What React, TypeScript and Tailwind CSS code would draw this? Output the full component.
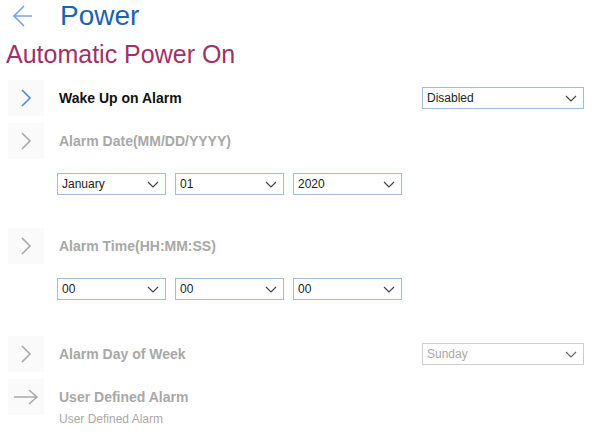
import { ReactNode } from 'react';

type SelectProps = {
  value: string;
  width: string;
  disabled?: boolean;
};

function FakeSelect({ value, width, disabled }: SelectProps) {
  return (
    <div
      className={`${width} h-[22px] flex items-center justify-between border pl-[4px] pr-[6px] bg-white text-[12px] ${
        disabled ? 'border-[#cfcfcf] text-[#a8a8a8]' : 'border-[#a3bcd8] text-[#222]'
      }`}
    >
      <span>{value}</span>
      <svg width="12" height="7" viewBox="0 0 12 7" fill="none">
        <path
          d="M1 1l5 5 5-5"
          stroke={disabled ? '#666' : '#444'}
          strokeWidth="1.2"
        />
      </svg>
    </div>
  );
}

function Tile({ children }: { children: ReactNode }) {
  return (
    <div className="ml-2 w-9 h-9 flex items-center justify-center bg-[#fafafa] shrink-0">
      {children}
    </div>
  );
}

function Chevron({ color }: { color: string }) {
  return (
    <svg width="14" height="20" viewBox="0 0 14 20" fill="none">
      <path d="M3 2l8 8-8 8" stroke={color} strokeWidth="1.6" />
    </svg>
  );
}

export default function App() {
  return (
    <main
      className="w-[602px] h-[444px] bg-white overflow-hidden"
      style={{ fontFamily: '"Liberation Sans", Arial, sans-serif' }}
    >
      <header className="h-8 flex items-center">
        <div className="ml-[10px] w-[24px] h-[28px] flex items-center justify-center">
          <svg width="21" height="24" viewBox="0 0 21 24" fill="none">
            <path
              d="M20 12H2M12 2L2 12l10 10"
              stroke="#75a2e8"
              strokeWidth="1.6"
            />
          </svg>
        </div>
        <h1 className="ml-[26px] text-[28px] leading-8 text-[#1b63b0]">Power</h1>
      </header>

      <h2 className="mt-2 ml-[6px] text-[25px] leading-[28px] text-[#9f3169]">
        Automatic Power On
      </h2>

      <div className="mt-3 flex items-center">
        <Tile>
          <Chevron color="#4f87e6" />
        </Tile>
        <span className="ml-[15px] flex-1 text-[14px] font-bold text-[#111]">
          Wake Up on Alarm
        </span>
        <div className="mr-[18px]">
          <FakeSelect value="Disabled" width="w-[162px]" />
        </div>
      </div>

      <div className="mt-[7px] flex items-center">
        <Tile>
          <Chevron color="#a8a8a8" />
        </Tile>
        <span className="ml-[15px] text-[14px] font-bold text-[#a8a8a8]">
          Alarm Date(MM/DD/YYYY)
        </span>
      </div>

      <div className="mt-[14px] ml-[57px] flex gap-[9px]">
        <FakeSelect value="January" width="w-[109px]" />
        <FakeSelect value="01" width="w-[109px]" />
        <FakeSelect value="2020" width="w-[109px]" />
      </div>

      <div className="mt-[33px] flex items-center">
        <Tile>
          <Chevron color="#a8a8a8" />
        </Tile>
        <span className="ml-[15px] text-[14px] font-bold text-[#a8a8a8]">
          Alarm Time(HH:MM:SS)
        </span>
      </div>

      <div className="mt-[14px] ml-[57px] flex gap-[9px]">
        <FakeSelect value="00" width="w-[109px]" />
        <FakeSelect value="00" width="w-[109px]" />
        <FakeSelect value="00" width="w-[109px]" />
      </div>

      <div className="mt-[36px] flex items-center">
        <Tile>
          <Chevron color="#a8a8a8" />
        </Tile>
        <span className="ml-[15px] flex-1 text-[14px] font-bold text-[#a8a8a8]">
          Alarm Day of Week
        </span>
        <div className="mr-[18px]">
          <FakeSelect value="Sunday" width="w-[162px]" disabled />
        </div>
      </div>

      <div className="mt-[7px] flex items-start">
        <Tile>
          <svg width="26" height="16" viewBox="0 0 26 16" fill="none">
            <path d="M1 8h23M16 1l8 7-8 7" stroke="#a8a8a8" strokeWidth="1.5" />
          </svg>
        </Tile>
        <div className="ml-[15px] flex flex-col">
          <span className="text-[14px] leading-9 font-bold text-[#a8a8a8]">
            User Defined Alarm
          </span>
          <span className="-mt-[3px] text-[12px] leading-[14px] text-[#a8a8a8]">
            User Defined Alarm
          </span>
        </div>
      </div>
    </main>
  );
}
